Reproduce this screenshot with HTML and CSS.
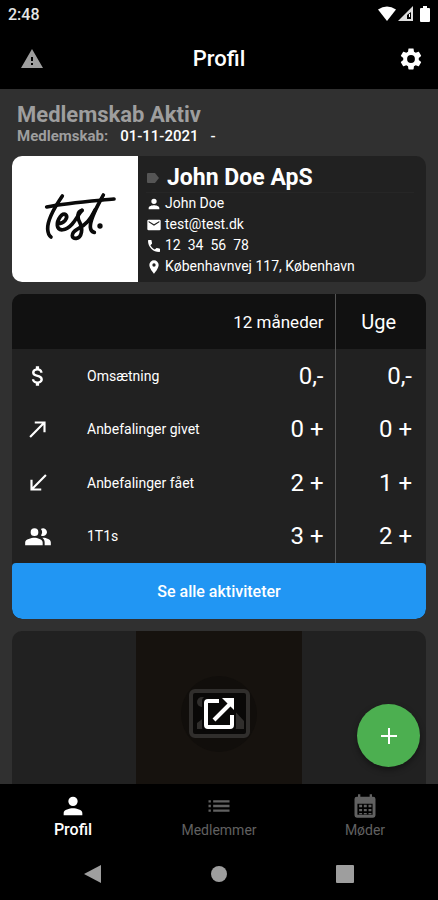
FILE: index.html
```html
<!DOCTYPE html>
<html lang="da">
<head>
<meta charset="utf-8">
<meta name="viewport" content="width=device-width, initial-scale=1">
<title>Profil</title>
<link rel="stylesheet" href="styles.css">
</head>
<body>
<div class="status">
  <span>2:48</span>
  <span class="status-icons">
    <svg width="18" height="16" viewBox="0 0 18 16" fill="#fff"><path d="M0 3.500Q9-2.500 18 3.500L9 15z"/></svg>
    <svg width="16" height="16" viewBox="0 0 16 16"><path d="M15 0v15H0z" fill="#ddd"/><path d="M13 6v7H9V9z" fill="#000"/><path d="M11 8h1v3h-1z" fill="#fff"/></svg>
    <svg width="10" height="16" viewBox="0 0 10 16" fill="#fff"><path d="M3 0h4v2h2q1 0 1 1v12q0 1-1 1H1q-1 0-1-1V3q0-1 1-1h2z"/></svg>
  </span>
</div>
<header class="appbar">
  <button class="icon-button" aria-label="Advarsel"><svg width="24" height="24" viewBox="0 0 24 24" fill="#9e9e9e"><path d="M1 21h22L12 2zm12-3h-2v-2h2zm0-4h-2v-4h2z"/></svg></button>
  <h1>Profil</h1>
  <button class="icon-button" aria-label="Indstillinger"><svg width="26" height="26" viewBox="0 0 24 24" fill="#fff"><path d="M19.140 12.940c.040-.300.060-.610.060-.940 0-.320-.020-.640-.070-.940l2.030-1.580c.180-.140.230-.410.120-.610l-1.920-3.320c-.120-.220-.370-.290-.590-.220l-2.390.960c-.500-.380-1.030-.700-1.620-.940L14.400 2.810c-.040-.240-.240-.410-.480-.410h-3.840c-.240 0-.430.170-.470.410L9.250 5.350c-.590.240-1.130.570-1.620.940L5.240 5.330c-.220-.080-.470 0-.590.220L2.740 8.870c-.120.210-.080.470.120.610l2.030 1.580c-.050.300-.090.630-.090.940s.020.640.070.940l-2.030 1.580c-.180.140-.230.410-.120.610l1.920 3.320c.120.220.370.290.590.220l2.390-.960c.500.380 1.030.700 1.620.940l.360 2.540c.050.240.240.410.480.410h3.840c.240 0 .440-.170.470-.410l.360-2.540c.590-.240 1.130-.560 1.620-.940l2.390.960c.220.080.470 0 .590-.220l1.920-3.320c.120-.220.070-.470-.120-.610zM12 15.600A3.600 3.600 0 1 1 12 8.400a3.600 3.600 0 0 1 0 7.200z"/></svg></button>
</header>
<main>
  <section class="membership">
    <h2>Medlemskab Aktiv</h2>
    <p><b>Medlemskab:</b><span>01-11-2021</span><span>-</span></p>
  </section>
  <section class="card profile">
    <div class="logo">
      <svg width="90" height="60" viewBox="-30 12 270 180" fill="none" stroke="#0a0a0a" stroke-width="11" stroke-linecap="round" stroke-linejoin="round" role="img" aria-label="test."><path d="M20 66C80 54 150 49 222 42"/><path d="M67 33C45 65 22 105 23 132q1 18 10 24"/><path d="M54 116C72 116 86 98 77 89S50 104 52 122s26 16 44-4c12-13 20-32 30-42"/><path d="M126 76c-16 4-14 24-6 38 9 16 6 44-11 46-15 2-18-15 2-27 28-14 40-30 54-58"/><path d="M190 30C172 64 150 100 151 126q1 14 12 16"/><circle cx="180" cy="123" r="8" fill="#0a0a0a" stroke="none"/></svg>
    </div>
    <div class="details">
      <h3><svg width="14" height="12" viewBox="0 0 14 12" fill="#555"><path d="M2 1h7l4 5-4 5H2q-1 0-1-1V2q0-1 1-1z"/></svg>John Doe ApS</h3>
      <ul>
        <li><svg width="16" height="16" viewBox="0 0 24 24"><path d="M12 12a4 4 0 1 0 0-8 4 4 0 0 0 0 8zm0 2c-3 0-8 1.300-8 4v2h16v-2c0-2.700-5-4-8-4z"/></svg>John Doe</li>
        <li><svg width="16" height="16" viewBox="0 0 24 24"><path d="M20 4H4a2 2 0 0 0-2 2v12a2 2 0 0 0 2 2h16a2 2 0 0 0 2-2V6a2 2 0 0 0-2-2zm0 4-8 5-8-5V6l8 5 8-5z"/></svg>test@test.dk</li>
        <li class="phone"><svg width="16" height="16" viewBox="0 0 24 24"><path d="M6.600 10.800c1.400 2.800 3.800 5.100 6.600 6.600l2.200-2.200c.300-.300.700-.400 1-.200 1.100.400 2.300.600 3.600.600.600 0 1 .400 1 1V20c0 .600-.400 1-1 1C10.600 21 3 13.400 3 4c0-.600.500-1 1-1h3.500c.600 0 1 .400 1 1 0 1.200.200 2.400.600 3.600.100.300 0 .700-.200 1z"/></svg><span>12</span><span>34</span><span>56</span><span>78</span></li>
        <li><svg width="16" height="16" viewBox="0 0 24 24"><path d="M12 2a7 7 0 0 0-7 7c0 5.200 7 13 7 13s7-7.800 7-13a7 7 0 0 0-7-7zm0 9.500a2.500 2.500 0 1 1 0-5 2.500 2.500 0 0 1 0 5z"/></svg>Københavnvej 117, København</li>
      </ul>
    </div>
  </section>
  <section class="card activity">
    <table>
      <colgroup><col class="col-icon"><col><col class="col-year"><col class="col-week"></colgroup>
      <thead><tr><th colspan="3" scope="col">12 måneder</th><th scope="col" class="week">Uge</th></tr></thead>
      <tbody>
        <tr><td class="symbol"><svg width="26" height="26" viewBox="0 0 24 24"><path d="M11.800 10.900c-2.270-.590-3-1.200-3-2.150 0-1.090 1.010-1.850 2.700-1.850 1.780 0 2.440.850 2.500 2.100h2.210c-.070-1.720-1.120-3.300-3.210-3.810V3h-3v2.160c-1.940.420-3.500 1.680-3.500 3.610 0 2.310 1.910 3.460 4.700 4.130 2.500.600 3 1.480 3 2.410 0 .690-.490 1.790-2.700 1.790-2.060 0-2.870-.920-2.980-2.100h-2.200c.120 2.190 1.760 3.420 3.680 3.830V21h3v-2.150c1.950-.370 3.500-1.500 3.500-3.550 0-2.840-2.430-3.810-4.700-4.400z"/></svg></td><th scope="row">Omsætning</th><td>0,-</td><td>0,-</td></tr>
        <tr><td class="symbol"><svg width="26" height="26" viewBox="0 0 24 24"><path d="M9 5v2h6.600L4 18.600 5.400 20 17 8.400V15h2V5z"/></svg></td><th scope="row">Anbefalinger givet</th><td>0 +</td><td>0 +</td></tr>
        <tr><td class="symbol"><svg width="26" height="26" viewBox="0 0 24 24"><path d="M20 5.400 18.600 4 7 15.600V9H5v10h10v-2H8.400z"/></svg></td><th scope="row">Anbefalinger fået</th><td>2 +</td><td>1 +</td></tr>
        <tr><td class="symbol"><svg width="28" height="28" viewBox="0 0 24 24"><path d="M16.500 12a3.300 3.300 0 1 0-2-6c1.400 1.700 1.400 3.800 0 5.500.6.300 1.300.5 2 .5zM9 12a3.300 3.300 0 1 0 0-6.600A3.300 3.300 0 0 0 9 12zm0 1.500c-2.700 0-8 1.300-8 4V20h15v-2.500c0-2.700-4.700-4-7-4zm7.500 0h-.8c1.200.9 2 2.200 2 4V20H23v-2.500c0-2.700-4-4-6.500-4z"/></svg></td><th scope="row">1T1s</th><td>3 +</td><td>2 +</td></tr>
      </tbody>
    </table>
    <button class="all">Se alle aktiviteter</button>
  </section>
  <section class="card media">
    <button class="open" aria-label="Åbn">
      <svg width="76" height="76" viewBox="0 0 76 76"><circle cx="38" cy="38" r="38" fill="#110e0b"/><rect x="10" y="15" width="57" height="45" rx="4" fill="#090807" stroke="#302e2c" stroke-width="4"/><circle cx="21" cy="26" r="5" fill="#302e2c"/><path d="M16 53v-6l8-6 9 4 17-14 13 14v8z" fill="#302e2c"/><path d="M25 25h26v26H25z" fill="#090807" stroke="#090807" stroke-width="8" stroke-linejoin="round"/><g fill="none" stroke="#fff" stroke-width="4"><path d="M38 25H27q-2 0-2 2v22q0 2 2 2h22q2 0 2-2V39"/><path d="M33 44 50 27"/><path d="M41 22h12v12z" fill="#fff" stroke="none"/></g></svg>
    </button>
  </section>
  <button class="fab" aria-label="Tilføj"><svg width="18" height="18" viewBox="0 0 18 18" stroke="#fff" stroke-width="2"><path d="M9 1v16M1 9h16"/></svg></button>
</main>
<nav class="tabs">
  <a href="#profil" class="active"><svg width="28" height="28" viewBox="0 0 24 24"><path d="M12 12a4 4 0 1 0 0-8 4 4 0 0 0 0 8zm0 2c-3 0-8 1.300-8 4v2h16v-2c0-2.700-5-4-8-4z"/></svg>Profil</a>
  <a href="#medlemmer"><svg width="28" height="28" viewBox="0 0 24 24"><path d="M3 7h2v2H3zm0 4h2v2H3zm0 4h2v2H3zm4-8h14v2H7zm0 4h14v2H7zm0 4h14v2H7z"/></svg>Medlemmer</a>
  <a href="#moder"><svg width="28" height="28" viewBox="0 0 24 24"><path fill-rule="evenodd" d="M6 2h2v2h8V2h2v2h1a2 2 0 0 1 2 2v14a2 2 0 0 1-2 2H5a2 2 0 0 1-2-2V6a2 2 0 0 1 2-2h1zM5.500 10v9.500h13V10zM7 11h2.500v2H7zm4 0h2.500v2H11zm4 0h2.500v2H15zm-8 3.500h2.500v2H7zm4 0h2.500v2H11zm4 0h2.500v2H15zM7 18h2.500v1H7zm4 0h2.500v1H11zm4 0h2.500v1H15z"/></svg>Møder</a>
</nav>
<div class="system">
  <button aria-label="Tilbage"><svg width="18" height="18" viewBox="0 0 18 18"><path d="M17 0v18L0 9z"/></svg></button>
  <button aria-label="Hjem"><svg width="18" height="18" viewBox="0 0 18 18"><circle cx="9" cy="9" r="8"/></svg></button>
  <button aria-label="Oversigt"><svg width="18" height="18" viewBox="0 0 18 18"><rect width="18" height="18" rx="1"/></svg></button>
</div>
</body>
</html>
```
FILE: styles.css
```css
* { box-sizing: border-box; }
body {
  margin: 0;
  height: 100vh;
  display: flex;
  flex-direction: column;
  background: #000;
  color: #fff;
  font-family: Roboto, "Liberation Sans", sans-serif;
  font-size: 14px;
}
h1, h2, h3, p, ul { margin: 0; padding: 0; }
svg { display: block; flex: none; }
button { margin: 0; padding: 0; border: 0; background: none; color: inherit; font: inherit; }

.status {
  display: flex;
  justify-content: space-between;
  align-items: center;
  height: 28px;
  padding: 0 8px;
  font-size: 16px;
  font-weight: 500;
  color: #e6e6e6;
}
.status-icons { display: flex; gap: 2px; }
.status-icons svg:last-child { margin-left: 4px; }

.appbar {
  display: flex;
  justify-content: space-between;
  align-items: center;
  height: 61px;
  padding: 0 12px;
}
.appbar h1 { font-size: 22px; font-weight: 500; }
.icon-button { display: grid; place-items: center; width: 40px; height: 40px; }
.icon-button:last-child { width: 30px; margin-left: 10px; }

main {
  position: relative;
  flex: 1;
  min-height: 0;
  overflow: hidden;
  display: flex;
  flex-direction: column;
  gap: 12px;
  padding: 13px 12px 0;
  background: #303030;
}
.membership { padding: 0 5px; color: #9e9e9e; }
.membership h2 { font-size: 22px; line-height: 26px; font-weight: 700; }
.membership p { display: flex; gap: 12px; font-size: 15px; line-height: 16px; }
.membership b { font-weight: 700; }
.membership span { color: #fff; font-weight: 500; }

.card { flex: none; overflow: hidden; border-radius: 10px; background: #212121; }

.profile { display: flex; height: 126px; }
.logo { display: grid; place-items: center; width: 126px; background: #fff; }
.details { flex: 1; padding: 8px 12px 0 8px; }
.details h3 {
  display: flex;
  align-items: center;
  gap: 7px;
  border-bottom: 1px solid #262626;
  font-size: 23px;
  line-height: 28px;
  font-weight: 700;
}
.details ul { list-style: none; }
.details li { display: flex; align-items: center; gap: 3px; line-height: 21px; }
.details li svg { fill: #fff; }
.details .phone span + span { margin-left: 4px; }

table { width: 100%; height: 269px; border-collapse: collapse; table-layout: fixed; }
.col-icon { width: 52px; }
.col-year { width: 88px; }
.col-week { width: 91px; }
th, td { padding: 0; }
thead tr { height: 55px; background: #111; }
thead th { padding-right: 11px; text-align: right; font-size: 17px; font-weight: 400; }
thead .week { padding: 0 4px 0 0; text-align: center; font-size: 20px; }
tbody th { padding-left: 23px; text-align: left; font-weight: 400; }
tbody td { padding-right: 11px; text-align: right; font-size: 24px; white-space: nowrap; }
tbody td:last-child { padding-right: 14px; }
th:last-child, td:last-child { border-left: 1px solid #555; }
tbody .symbol { padding: 0; }
.symbol svg { margin: 0 auto; fill: #fff; }
.all {
  display: block;
  width: 100%;
  height: 56px;
  border-radius: 4px 4px 10px 10px;
  background: #2196f3;
  font-size: 16px;
  font-weight: 500;
}

.media { display: flex; justify-content: center; height: 166px; }
.open { display: grid; place-items: center; width: 40%; background: #16120e; }

.fab {
  position: absolute;
  right: 18px;
  bottom: 17px;
  display: grid;
  place-items: center;
  width: 63px;
  height: 63px;
  border-radius: 50%;
  background: #4caf50;
  box-shadow: 0 3px 6px rgba(0, 0, 0, 0.4);
}

.tabs { display: flex; height: 64px; padding-top: 8px; }
.tabs a {
  flex: 1;
  display: flex;
  flex-direction: column;
  align-items: center;
  color: #616161;
  text-decoration: none;
  line-height: 20px;
}
.tabs svg { fill: currentColor; }
.tabs .active { color: #fff; font-size: 16px; font-weight: 500; }

.system { display: flex; justify-content: center; gap: 108px; height: 52px; }
.system button { display: grid; place-items: center; width: 18px; }
.system svg { fill: #9e9e9e; }
```
